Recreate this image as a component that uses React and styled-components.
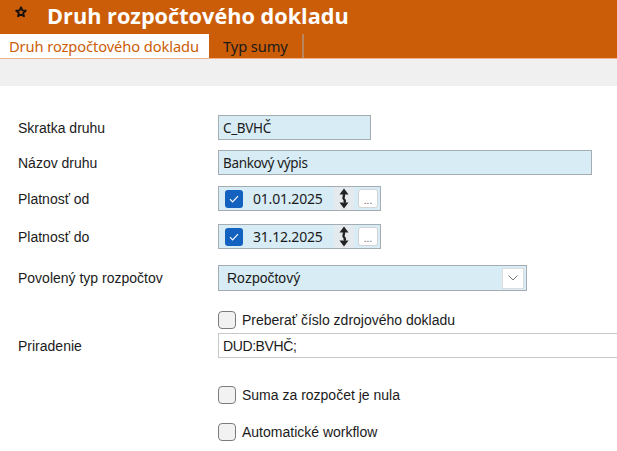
import styled, { createGlobalStyle } from 'styled-components'

const ORANGE = '#cc5d08'
const FIELD_BG = '#d7ecf5'
const FIELD_BORDER = '#a3adb2'

const GlobalStyle = createGlobalStyle`
  html, body {
    margin: 0;
    padding: 0;
    overflow: hidden;
    background: #ffffff;
  }
  body {
    font-family: 'Liberation Sans', Arial, sans-serif;
    font-size: 14px;
    color: #1b1b1b;
  }
`

const Page = styled.div`
  width: 617px;
  height: 451px;
  overflow: hidden;
`

const Header = styled.header`
  background: ${ORANGE};
  height: 58px;
  display: flex;
  flex-direction: column;
  border-bottom: 1px solid #f0b089;
`

const TitleRow = styled.div`
  height: 33px;
  display: flex;
  align-items: center;
  padding-left: 15px;
  gap: 20px;
`

const StarWrap = styled.span`
  display: flex;
  margin-bottom: 9px;
`

const Title = styled.h1`
  margin: 0;
  font-family: 'Open Sans', 'Noto Sans', sans-serif;
  font-weight: 700;
  font-size: 21.7px;
  color: #ffffff;
  line-height: 1;
  padding-bottom: 2px;
`

const TabBar = styled.nav`
  flex: 1;
  display: flex;
  align-items: stretch;
  padding-top: 1px;
`

const Tab = styled.div`
  display: flex;
  align-items: center;
  padding: 0 ${p => (p.$active ? '10px' : '14px')} 0 ${p => (p.$active ? '9px' : '14px')};
  font-family: 'Noto Sans', 'Open Sans', sans-serif;
  font-size: 14.7px;
  letter-spacing: -0.1px;
  background: ${p => (p.$active ? '#ffffff' : 'transparent')};
  color: ${p => (p.$active ? ORANGE : '#1a1a1a')};
  border-right: ${p => (p.$divider ? '2px solid #b7865e' : 'none')};
`

const Toolbar = styled.div`
  height: 27px;
  background: #f0f0f0;
`

const Form = styled.div`
  display: grid;
  grid-template-columns: 218px 1fr;
  grid-template-rows: 35px 36px 38px 41px 46px 22px 53px 37px 30px;
  padding-top: 29px;
`

const Label = styled.div`
  padding-left: 18px;
  height: 25px;
  display: flex;
  align-items: center;
  white-space: nowrap;
`

const Cell = styled.div`
  display: flex;
  align-items: flex-start;
  min-width: 0;
`

const TextInput = styled.div`
  box-sizing: border-box;
  height: 25px;
  width: ${p => p.$width};
  flex-shrink: 0;
  display: flex;
  align-items: center;
  padding-left: 4px;
  background: ${p => (p.$plain ? '#ffffff' : FIELD_BG)};
  border: 1px solid ${p => (p.$plain ? '#c8c8c8' : FIELD_BORDER)};
  border-right: ${p => (p.$plain ? 'none' : `1px solid ${FIELD_BORDER}`)};
  font-family: ${p => (p.$plain ? "'Liberation Sans', Arial, sans-serif" : "'Noto Sans', 'Open Sans', sans-serif")};
  font-size: ${p => (p.$plain ? '14px' : '13.5px')};
  letter-spacing: ${p => (p.$plain ? '-0.4px' : '-0.35px')};
  white-space: nowrap;
`

const DateField = styled.div`
  box-sizing: border-box;
  width: 163px;
  height: 25px;
  display: flex;
  align-items: center;
  background: ${FIELD_BG};
  border: 1px solid ${FIELD_BORDER};
  padding-left: 6px;
`

const BlueCheck = styled.span`
  width: 18px;
  height: 18px;
  border-radius: 3px;
  background: #1462c0;
  display: flex;
  align-items: center;
  justify-content: center;
  flex-shrink: 0;
`

const DateText = styled.span`
  margin-left: 10px;
  font-family: 'Noto Sans', 'Open Sans', sans-serif;
  font-size: 14px;
  letter-spacing: -0.2px;
  width: 81px;
`

const Spinner = styled.span`
  width: 20px;
  height: 23px;
  background: #e4eaed;
  display: flex;
  align-items: center;
  justify-content: center;
`

const DotsButton = styled.span`
  box-sizing: border-box;
  margin-left: 4px;
  width: 20px;
  height: 19px;
  background: #ffffff;
  border: 1px solid #d4d4d4;
  border-radius: 3px;
  display: flex;
  align-items: flex-end;
  justify-content: center;
  font-size: 10px;
  line-height: 12px;
  color: #555;
`

const Select = styled.div`
  box-sizing: border-box;
  width: 309px;
  height: 26px;
  display: flex;
  align-items: center;
  justify-content: space-between;
  background: ${FIELD_BG};
  border: 1px solid ${FIELD_BORDER};
  padding: 0 2px 0 8px;
  font-family: 'Liberation Sans', Arial, sans-serif;
  font-size: 14px;
`

const SelectButton = styled.span`
  box-sizing: border-box;
  width: 22px;
  height: 21px;
  background: #ffffff;
  border: 1px solid #dcdcdc;
  display: flex;
  align-items: center;
  justify-content: center;
`

const CheckRow = styled.label`
  display: flex;
  align-items: center;
  gap: 6px;
  height: 18px;
  font-size: 14px;
  white-space: nowrap;
`

const Box = styled.span`
  box-sizing: border-box;
  width: 18px;
  height: 18px;
  border: 1px solid #7c7c7c;
  border-radius: 4px;
  background: #f2f2f2;
`

const Star = () => (
  <svg width="12" height="12" viewBox="0 0 24 24">
    <path
      d="M12 2.5l2.8 6.3 6.8.6-5.2 4.5 1.6 6.7L12 17.1l-6 3.5 1.6-6.7-5.2-4.5 6.8-.6z"
      fill="none"
      stroke="#111"
      strokeWidth="3.6"
      strokeLinejoin="round"
    />
  </svg>
)

const Tick = () => (
  <svg width="10" height="8" viewBox="0 0 10 8">
    <path d="M1 4.2l2.6 2.6L9 1.2" fill="none" stroke="#fff" strokeWidth="1.2" />
  </svg>
)

const UpDown = () => (
  <svg width="10" height="21" viewBox="0 0 10 21">
    <path d="M5 0.5L9.5 6.5H0.5z" fill="#222" />
    <path d="M5 20.5L0.5 14.5H9.5z" fill="#222" />
    <path d="M4.5 6c1.8 2 -1.2 3.5 0.3 5s1.5 2.5 0.2 3.5" fill="none" stroke="#222" strokeWidth="2.4" />
  </svg>
)

const Chevron = () => (
  <svg width="10" height="6" viewBox="0 0 10 6">
    <path d="M0.5 0.5L5 5l4.5-4.5" fill="none" stroke="#777" strokeWidth="1" />
  </svg>
)

const DateInput = ({ value }) => (
  <DateField>
    <BlueCheck>
      <Tick />
    </BlueCheck>
    <DateText>{value}</DateText>
    <Spinner>
      <UpDown />
    </Spinner>
    <DotsButton>...</DotsButton>
  </DateField>
)

const Check = ({ children }) => (
  <CheckRow>
    <Box />
    {children}
  </CheckRow>
)

export default function App() {
  return (
    <Page>
      <GlobalStyle />
      <Header>
        <TitleRow>
          <StarWrap>
            <Star />
          </StarWrap>
          <Title>Druh rozpočtového dokladu</Title>
        </TitleRow>
        <TabBar>
          <Tab $active>Druh rozpočtového dokladu</Tab>
          <Tab $divider>Typ sumy</Tab>
        </TabBar>
      </Header>
      <Toolbar />
      <Form>
        <Label>Skratka druhu</Label>
        <Cell>
          <TextInput $width="153px">C_BVHČ</TextInput>
        </Cell>

        <Label>Názov druhu</Label>
        <Cell>
          <TextInput $width="374px">Bankový výpis</TextInput>
        </Cell>

        <Label>Platnosť od</Label>
        <Cell>
          <DateInput value="01.01.2025" />
        </Cell>

        <Label>Platnosť do</Label>
        <Cell>
          <DateInput value="31.12.2025" />
        </Cell>

        <Label>Povolený typ rozpočtov</Label>
        <Cell>
          <Select>
            Rozpočtový
            <SelectButton>
              <Chevron />
            </SelectButton>
          </Select>
        </Cell>

        <div />
        <Cell>
          <Check>Preberať číslo zdrojového dokladu</Check>
        </Cell>

        <Label>Priradenie</Label>
        <Cell>
          <TextInput $plain $width="420px">DUD:BVHČ;</TextInput>
        </Cell>

        <div />
        <Cell>
          <Check>Suma za rozpočet je nula</Check>
        </Cell>

        <div />
        <Cell>
          <Check>Automatické workflow</Check>
        </Cell>
      </Form>
    </Page>
  )
}
